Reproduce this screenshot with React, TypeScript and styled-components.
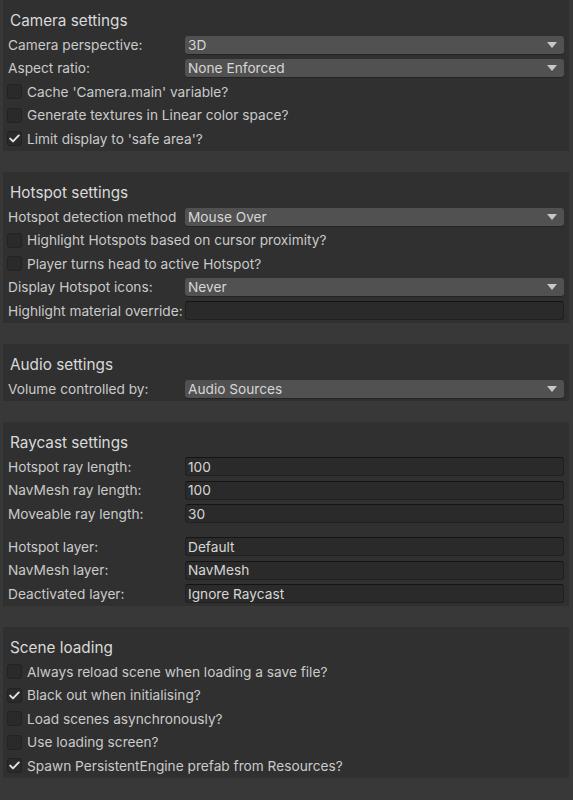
import styled, { createGlobalStyle } from "styled-components";

const GlobalStyle = createGlobalStyle`
    html, body {
        margin: 0;
        padding: 0;
        background: #383838;
    }
    body {
        font-family: Inter, "Noto Sans", sans-serif;
        color: #cacaca;
        -webkit-font-smoothing: antialiased;
    }
`;

const Page = styled.div`
    display: flex;
    flex-direction: column;
    gap: 21.5px;
    padding: 0 4px 24px 3px;
    width: 573px;
    box-sizing: border-box;
`;

const Panel = styled.section`
    background: #303030;
    padding: 8px 5px 0 4px;
`;

const Title = styled.h2`
    margin: 0;
    height: 25px;
    line-height: 25px;
    padding-left: 3px;
    font-size: 15.3px;
    font-weight: 400;
    color: #dadada;
`;

const Row = styled.div`
    display: flex;
    align-items: center;
    height: 23.5px;
`;

const Spacer = styled.div`
    height: 9.5px;
`;

const Label = styled.span`
    flex: none;
    min-width: 177px;
    padding-left: 1px;
    font-size: 13.7px;
    white-space: nowrap;
`;

const Dropdown = styled.div`
    flex: 1;
    display: flex;
    align-items: center;
    justify-content: space-between;
    height: 18px;
    padding: 0 7px 0 3px;
    border-radius: 3px;
    background: #515151;
    box-shadow: 0 1px 0 #242424;
    font-size: 13.7px;
    color: #d6d6d6;
`;

const Arrow = styled.span`
    width: 0;
    height: 0;
    border-left: 5px solid transparent;
    border-right: 5px solid transparent;
    border-top: 6px solid #c8c8c8;
`;

const Field = styled.div`
    flex: 1;
    display: flex;
    align-items: center;
    height: 19px;
    box-sizing: border-box;
    padding: 0 2px;
    border-radius: 3px;
    background: #2a2a2a;
    border: 1px solid #202020;
    border-top-color: #141414;
    font-size: 13.7px;
    color: #d6d6d6;
`;

const Box = styled.span<{ $checked?: boolean }>`
    flex: none;
    display: flex;
    align-items: center;
    justify-content: center;
    width: 15px;
    height: 15px;
    box-sizing: border-box;
    margin-right: 5px;
    border-radius: 3px;
    background: #2a2a2a;
    border: 1px solid #222222;
`;

const CheckText = styled.span`
    font-size: 13.7px;
    white-space: nowrap;
`;

const Tick = () => (
    <svg width="11" height="9" viewBox="0 0 11 9">
        <polyline
            points="1.2,4.6 4,7.4 9.8,1.4"
            fill="none"
            stroke="#e4e4e4"
            strokeWidth="1.9"
            strokeLinecap="round"
            strokeLinejoin="round"
        />
    </svg>
);

const Select = ({ label, value }: { label: string; value: string }) => (
    <Row>
        <Label>{label}</Label>
        <Dropdown>
            <span>{value}</span>
            <Arrow />
        </Dropdown>
    </Row>
);

const Input = ({ label, value }: { label: string; value?: string }) => (
    <Row>
        <Label>{label}</Label>
        <Field>{value}</Field>
    </Row>
);

const Check = ({ label, checked }: { label: string; checked?: boolean }) => (
    <Row>
        <Box $checked={checked}>{checked && <Tick />}</Box>
        <CheckText>{label}</CheckText>
    </Row>
);

export default function App() {
    return (
        <>
            <GlobalStyle />
            <Page>
                <Panel>
                    <Title>Camera settings</Title>
                    <Select label="Camera perspective:" value="3D" />
                    <Select label="Aspect ratio:" value="None Enforced" />
                    <Check label="Cache 'Camera.main' variable?" />
                    <Check label="Generate textures in Linear color space?" />
                    <Check label="Limit display to 'safe area'?" checked />
                </Panel>
                <Panel>
                    <Title>Hotspot settings</Title>
                    <Select label="Hotspot detection method" value="Mouse Over" />
                    <Check label="Highlight Hotspots based on cursor proximity?" />
                    <Check label="Player turns head to active Hotspot?" />
                    <Select label="Display Hotspot icons:" value="Never" />
                    <Input label="Highlight material override:" />
                </Panel>
                <Panel>
                    <Title>Audio settings</Title>
                    <Select label="Volume controlled by:" value="Audio Sources" />
                </Panel>
                <Panel>
                    <Title>Raycast settings</Title>
                    <Input label="Hotspot ray length:" value="100" />
                    <Input label="NavMesh ray length:" value="100" />
                    <Input label="Moveable ray length:" value="30" />
                    <Spacer />
                    <Input label="Hotspot layer:" value="Default" />
                    <Input label="NavMesh layer:" value="NavMesh" />
                    <Input label="Deactivated layer:" value="Ignore Raycast" />
                </Panel>
                <Panel>
                    <Title>Scene loading</Title>
                    <Check label="Always reload scene when loading a save file?" />
                    <Check label="Black out when initialising?" checked />
                    <Check label="Load scenes asynchronously?" />
                    <Check label="Use loading screen?" />
                    <Check label="Spawn PersistentEngine prefab from Resources?" checked />
                </Panel>
            </Page>
        </>
    );
}
